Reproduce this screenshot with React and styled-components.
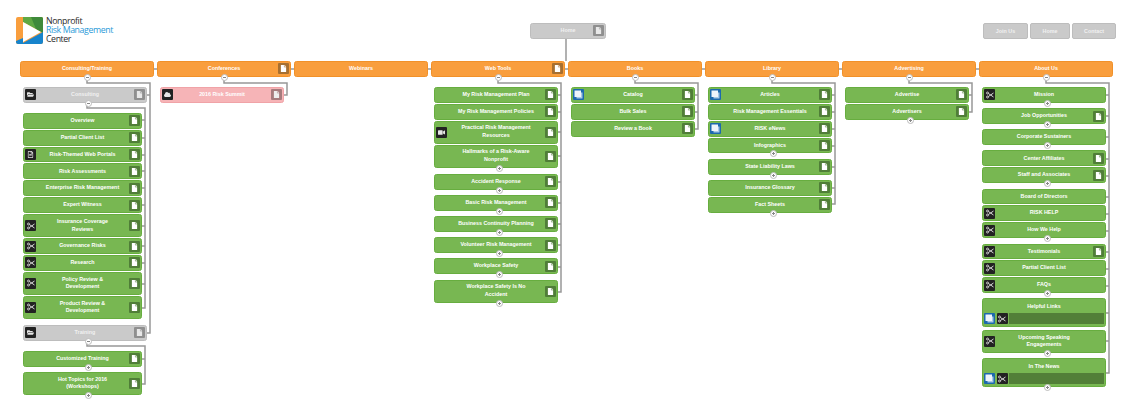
import React from 'react'
import styled, { createGlobalStyle } from 'styled-components'
import { FaCloud, FaFile, FaFolderOpen, FaRegFileAlt, FaVideo } from 'react-icons/fa'

/* start setting styled-components */

const Global = createGlobalStyle`
    html, body { margin: 0; background: #fff; }
    body { font-family: "Liberation Sans", Arial, sans-serif; }
`
const palette = {
    green: { bg: '#78b752', line: '#67ad3f', tile: '#507e38', text: '#fff', glyph: '#fff' },
    orange: { bg: '#f99e3d', line: '#f19129', tile: '#a76f30', text: '#fff', glyph: '#fff' },
    grey: { bg: '#cacaca', line: '#bdbdbd', tile: '#8f8f8f', text: '#f1f1f1', glyph: '#e8e8e8' },
    pink: { bg: '#f6b4b7', line: '#f0a3a7', tile: '#a67b7d', text: '#fff', glyph: '#eee' },
}
const heights = { single: '15.9px', tall: '23px', links: '28.5px' }

const Page = styled.div`
    position: relative;
    width: 1136px;
    height: 416px;
    overflow: hidden;
    background: #fff;
`
const Header = styled.header`
    display: grid;
    grid-template-columns: 514px 76px 1fr;
    height: 61px;
    padding: 0 20px 0 16px;
    box-sizing: border-box;
    align-items: start;
`
const Logo = styled.div`
    display: flex;
    gap: 3px;
    margin-top: 17px;
`
const LogoText = styled.div`
    font-family: "Open Sans", sans-serif;
    font-size: 8.8px;
    line-height: 8.8px;
    letter-spacing: -0.42px;
    color: #2b2b2b;
`
const LogoBlue = styled.div`
    color: #2a9ad8;
`
const HomeSlot = styled.div`
    margin-top: 23px;
`
const TopNav = styled.nav`
    display: grid;
    grid-template-columns: 45px 40px 44px;
    justify-content: end;
    column-gap: 2px;
    margin-top: 23px;
`
const NavButton = styled.div`
    height: 16px;
    box-sizing: border-box;
    display: flex;
    align-items: center;
    justify-content: center;
    background: #cacaca;
    border: 1px solid #bdbdbd;
    border-radius: 2px;
    color: #f1f1f1;
    font-size: 5.35px;
    font-weight: bold;
`
const Tree = styled.main`
    display: grid;
    grid-template-columns: repeat(8, 134px);
    column-gap: 3px;
    padding-left: 20px;
    align-items: start;
`
const Column = styled.section`
    display: flex;
    flex-direction: column;
`
const Toggle = styled.span`
    position: absolute;
    z-index: 2;
    left: ${(p) => (p.$centred ? '50%' : '64px')};
    bottom: -5px;
    width: 7px;
    height: 7px;
    margin-left: -3.5px;
    box-sizing: border-box;
    border: 1px solid #bcbcbc;
    border-radius: 50%;
    background: #fff;
    &::before {
        content: '';
        position: absolute;
        left: 1px;
        right: 1px;
        top: 2px;
        height: 1px;
        background: #888;
    }
    &::after {
        content: '';
        display: ${(p) => (p.$open ? 'none' : 'block')};
        position: absolute;
        top: 1px;
        bottom: 1px;
        left: 2px;
        width: 1px;
        background: #888;
    }
`
const NodeBox = styled.div`
    position: relative;
    z-index: 1;
    flex: none;
    height: ${(p) => heights[p.$height]};
    box-sizing: border-box;
    display: grid;
    grid-template-columns: 13px 1fr 13px;
    align-items: center;
    padding: 0 1px;
    background: ${(p) => palette[p.$kind].bg};
    border: 1px solid ${(p) => palette[p.$kind].line};
    border-radius: 2.5px;
    ${(p) => p.$close && 'margin-bottom: 2px;'}
    ${(p) => p.$loose && '&&&& { margin-bottom: 5px; }'}
`
const LinksBox = styled(NodeBox)`
    display: flex;
    flex-direction: column;
    align-items: stretch;
`
const Branch = styled.div`
    display: flex;
    flex-direction: column;
    gap: 1px;
    padding: 10px 7px 0 3px;
    & > ${NodeBox}:has(> ${Toggle}) {
        margin-bottom: 4.3px;
    }
`
const Leaves = styled(Branch)`
    padding: 10px 5px 0 0;
`
const Sections = styled.div`
    display: flex;
    flex-direction: column;
    gap: 6px;
    padding: 10px 7px 0 3px;
`
const Section = styled.div`
    display: flex;
    flex-direction: column;
`
const Label = styled.div`
    grid-column: 2;
    text-align: center;
    color: ${(p) => palette[p.$kind].text};
    font-size: 5.35px;
    font-weight: bold;
    line-height: 7.8px;
    white-space: pre-line;
`
const LinksLabel = styled(Label)`
    height: 13px;
    line-height: 14px;
`
const Strip = styled.div`
    display: flex;
    gap: 1.5px;
    margin-top: 1px;
    height: 11px;
`
const StripBar = styled.div`
    flex: 1;
    background: #527f38;
`
const Tile = styled.div`
    flex: none;
    width: 11px;
    height: 11px;
    border-radius: 1px;
    display: grid;
    place-items: center;
    font-size: 7px;
    background: ${(p) => p.$bg};
    color: ${(p) => p.$fg};
    justify-self: ${(p) => (p.$end ? 'end' : 'start')};
    grid-column: ${(p) => (p.$end ? 3 : 1)};
    grid-row: 1;
`
const Wires = styled.svg`
    position: absolute;
    left: 0;
    top: 0;
    z-index: 0;
`
/* end setting styled-components */

const stubs = (x, ys) => ys.map((y) => `M${x - 3} ${y}H${x}`).join('')
const wires = [
    'M20 69H1113',
    'M566 39V61',
    'M87 78V83H150V333H147' + stubs(150, [95]),
    'M87 104V108H145V308H142' + stubs(145, [120, 138, 155, 171, 188, 205, 226, 246, 263, 284]),
    'M87 342V346H145V384H142' + stubs(145, [359]),
    'M224 78V83H287V95H284',
    'M498 78V83H561V292H558' + stubs(561, [95, 112, 132, 156, 182, 203, 224, 245, 267]),
    'M635 78V83H698V129H695' + stubs(698, [95, 112]),
    'M772 78V83H835V204H832' + stubs(835, [95, 112, 129, 146, 167, 188]),
    'M909 78V83H972V112H969' + stubs(972, [95]),
    'M1046 78V83H1109V373H1106' + stubs(1109, [95, 116, 137, 159, 176, 197, 214, 231, 252, 269, 286, 313, 341]),
].join('')

const StackIcon = () => (
    <svg width="9" height="9" viewBox="0 0 9 9">
        <rect x="2.5" y="2.5" width="6" height="6" fill="#a9c9e6" />
        <rect x="0.5" y="0.5" width="6.5" height="6.5" fill="#eef4fa" />
    </svg>
)

const CutIcon = () => (
    <svg width="8" height="8" viewBox="0 0 8 8" fill="none" stroke="#d8d8d8">
        <circle cx="1.5" cy="2" r="1" strokeWidth="0.9" />
        <circle cx="1.5" cy="6" r="1" strokeWidth="0.9" />
        <path d="M2.4 2.5L7.5 6M2.4 5.5L7.5 2" strokeWidth="1" />
    </svg>
)

const glyphs = {
    cut: <CutIcon />,
    folder: <FaFolderOpen />,
    cloud: <FaCloud />,
    video: <FaVideo />,
    doc: <FaRegFileAlt />,
}

const TypeTile = ({ type }) =>
    type === 'stack' ? (
        <Tile $bg="#1c69ad" $fg="#fff"><StackIcon /></Tile>
    ) : (
        <Tile $bg="#222" $fg="#e6e6e6">{glyphs[type]}</Tile>
    )

const Node = ({ label, type, page, kind = 'green', tall, toggle, open, centred, loose, close, links }) => {
    const height = links ? 'links' : tall ? 'tall' : 'single'
    const mark = toggle ? <Toggle $centred={centred} $open={open} /> : null
    if (links) {
        return (
            <LinksBox $height={height} $kind={kind} $close={close}>
                <LinksLabel $kind={kind}>{label}</LinksLabel>
                <Strip>
                    <TypeTile type="stack" />
                    <TypeTile type="cut" />
                    <StripBar />
                </Strip>
                {mark}
            </LinksBox>
        )
    }
    return (
        <NodeBox $height={height} $kind={kind} $loose={loose}>
            {type && <TypeTile type={type} />}
            <Label $kind={kind}>{label}</Label>
            {page && (
                <Tile $end $bg={palette[kind].tile} $fg={palette[kind].glyph}><FaFile /></Tile>
            )}
            {mark}
        </NodeBox>
    )
}

const Top = (props) => <Node kind="orange" toggle open centred {...props} />

const Consulting = () => (
    <Column>
        <Top label="Consulting/Training" />
        <Sections>
            <Section>
                <Node label="Consulting" kind="grey" type="folder" page toggle open />
                <Leaves>
                    <Node label="Overview" page />
                    <Node label="Partial Client List" page />
                    <Node label="Risk-Themed Web Portals" type="doc" page />
                    <Node label="Risk Assessments" page />
                    <Node label="Enterprise Risk Management" page />
                    <Node label="Expert Witness" page />
                    <Node label={'Insurance Coverage\nReviews'} type="cut" page tall />
                    <Node label="Governance Risks" type="cut" page />
                    <Node label="Research" type="cut" page />
                    <Node label={'Policy Review &\nDevelopment'} type="cut" page tall />
                    <Node label={'Product Review &\nDevelopment'} type="cut" page tall />
                </Leaves>
            </Section>
            <Section>
                <Node label="Training" kind="grey" type="folder" page toggle open />
                <Leaves>
                    <Node label="Customized Training" page toggle />
                    <Node label={'Hot Topics for 2016\n(Workshops)'} page tall toggle />
                </Leaves>
            </Section>
        </Sections>
    </Column>
)

const App = () => (
    <Page>
        <Global />
        <Wires width="1136" height="416" fill="none">
            <path d={wires} stroke="#989898" strokeWidth="1.5" />
        </Wires>
        <Header>
            <Logo>
                <svg width="27" height="27" viewBox="0 0 27 27">
                    <rect width="27" height="27" rx="2" fill="#f99e3d" />
                    <path d="M7 0H25a2 2 0 0 1 2 2V16L7 5Z" fill="#5fa843" />
                    <path d="M15 0H25a2 2 0 0 1 2 2V16L20 12Z" fill="#3f8a3a" />
                    <path d="M0 24L7 21V26L27 15V25a2 2 0 0 1-2 2H2a2 2 0 0 1-2-2Z" fill="#1784cc" />
                    <path d="M7 5L25 15L7 25Z" fill="#fff" />
                </svg>
                <LogoText>
                    Nonprofit
                    <LogoBlue>Risk Management</LogoBlue>
                    Center
                </LogoText>
            </Logo>
            <HomeSlot>
                <Node label="Home" kind="grey" page />
            </HomeSlot>
            <TopNav>
                <NavButton>Join Us</NavButton>
                <NavButton>Home</NavButton>
                <NavButton>Contact</NavButton>
            </TopNav>
        </Header>
        <Tree>
            <Consulting />
            <Column>
                <Top label="Conferences" page />
                <Branch>
                    <Node label="2016 Risk Summit" kind="pink" type="cloud" page />
                </Branch>
            </Column>
            <Column>
                <Node label="Webinars" kind="orange" />
            </Column>
            <Column>
                <Top label="Web Tools" page />
                <Branch>
                    <Node label="My Risk Management Plan" page />
                    <Node label="My Risk Management Policies" page />
                    <Node label={'Practical Risk Management\nResources'} type="video" page tall />
                    <Node label={'Hallmarks of a Risk-Aware\nNonprofit'} page tall toggle loose />
                    <Node label="Accident Response" page toggle />
                    <Node label="Basic Risk Management" page toggle />
                    <Node label="Business Continuity Planning" page toggle />
                    <Node label="Volunteer Risk Management" page toggle />
                    <Node label="Workplace Safety" page toggle />
                    <Node label={'Workplace Safety Is No\nAccident'} page tall toggle />
                </Branch>
            </Column>
            <Column>
                <Top label="Books" />
                <Branch>
                    <Node label="Catalog" type="stack" page />
                    <Node label="Bulk Sales" page />
                    <Node label="Review a Book" page />
                </Branch>
            </Column>
            <Column>
                <Top label="Library" />
                <Branch>
                    <Node label="Articles" type="stack" page />
                    <Node label="Risk Management Essentials" page />
                    <Node label="RISK eNews" type="stack" page />
                    <Node label="Infographics" page toggle />
                    <Node label="State Liability Laws" page toggle />
                    <Node label="Insurance Glossary" page />
                    <Node label="Fact Sheets" page toggle />
                </Branch>
            </Column>
            <Column>
                <Top label="Advertising" />
                <Branch>
                    <Node label="Advertise" page />
                    <Node label="Advertisers" page toggle />
                </Branch>
            </Column>
            <Column>
                <Top label="About Us" />
                <Branch>
                    <Node label="Mission" type="cut" toggle />
                    <Node label="Job Opportunities" page toggle />
                    <Node label="Corporate Sustainers" toggle />
                    <Node label="Center Affiliates" page />
                    <Node label="Staff and Associates" page toggle />
                    <Node label="Board of Directors" />
                    <Node label="RISK HELP" type="cut" />
                    <Node label="How We Help" type="cut" toggle />
                    <Node label="Testimonials" type="cut" page />
                    <Node label="Partial Client List" type="cut" />
                    <Node label="FAQs" type="cut" toggle />
                    <Node label="Helpful Links" links close />
                    <Node label={'Upcoming Speaking\nEngagements'} type="cut" tall toggle />
                    <Node label="In The News" links toggle />
                </Branch>
            </Column>
        </Tree>
    </Page>
)

export default App
